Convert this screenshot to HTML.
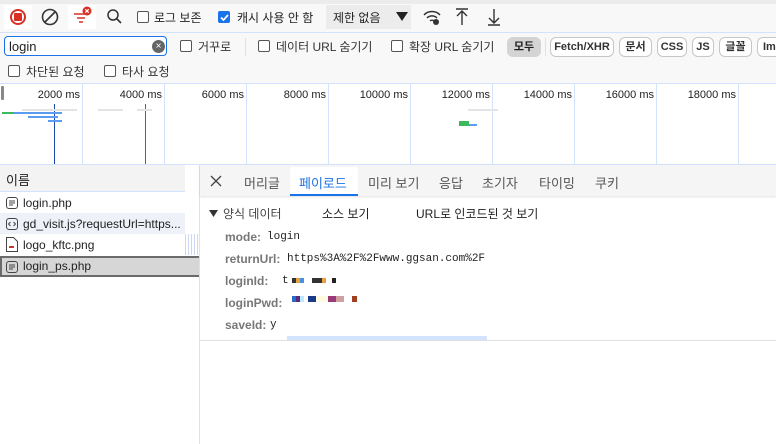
<!DOCTYPE html>
<html><head><meta charset="utf-8"><style>
*{box-sizing:border-box;margin:0;padding:0}
body{width:776px;height:444px;overflow:hidden;background:#fff;font-family:"Liberation Sans","Noto Sans CJK KR",sans-serif;font-size:12px;color:#1f1f1f;position:relative}
.a{position:absolute;white-space:nowrap}
.cb{position:absolute;width:12px;height:12px;border:1px solid #555;border-radius:2px;background:#fff}
.chip{position:absolute;top:37px;height:20px;border:1px solid #c7c7c7;border-radius:6px;background:#fff;font-size:11px;font-weight:bold;line-height:18px;text-align:center;color:#333;overflow:hidden}
.lbl{color:#777;font-weight:bold}
.mono{font-family:"Liberation Mono","DejaVu Sans Mono",monospace;font-size:11px}
.tl{position:absolute;top:84px;width:1px;height:80px;background:#d3e3fd}
.tlt{position:absolute;top:89px;font-size:11px;color:#222;text-align:right;width:70px}
.li{font-size:12px}
</style></head><body>
<div class="a" style="left:0;top:0;width:776px;height:84px;background:#f8f8f8"></div>
<div class="a" style="left:0;top:0;width:776px;height:4px;background:#ececec"></div>
<div class="a" style="left:0;top:32px;width:776px;height:1px;background:#d3e3fd"></div>
<div class="a" style="left:0;top:83px;width:776px;height:1px;background:#d3e3fd"></div>
<div class="a" style="left:4px;top:5px;width:28px;height:24px;background:#fff"></div>
<div class="a" style="left:10px;top:9px;width:16px;height:16px;border:2px solid #d93025;border-radius:50%"></div>
<div class="a" style="left:14px;top:13px;width:8px;height:8px;background:#d93025;border-radius:1px"></div>
<svg class="a" style="left:41px;top:8px" width="18" height="18"><circle cx="9" cy="9" r="7.5" fill="none" stroke="#333" stroke-width="1.6"/><line x1="4" y1="14" x2="14" y2="4" stroke="#333" stroke-width="1.6"/></svg>
<div class="a" style="left:68px;top:5px;width:28px;height:24px;background:#fff"></div>
<svg class="a" style="left:72px;top:6px" width="22" height="20"><line x1="2" y1="8" x2="14" y2="8" stroke="#d93025" stroke-width="1.5"/><line x1="5" y1="12" x2="13" y2="12" stroke="#d93025" stroke-width="1.5"/><line x1="7" y1="16" x2="11" y2="16" stroke="#d93025" stroke-width="1.5"/><circle cx="15" cy="5" r="4.5" fill="#d93025"/><path d="M13.3 3.3l3.4 3.4M16.7 3.3l-3.4 3.4" stroke="#fff" stroke-width="1.2"/></svg>
<svg class="a" style="left:106px;top:8px" width="18" height="18"><circle cx="7" cy="7" r="5" fill="none" stroke="#333" stroke-width="1.5"/><line x1="10.5" y1="10.5" x2="15" y2="15" stroke="#333" stroke-width="1.6"/></svg>
<div class="cb" style="left:137px;top:11px"></div>
<div class="a" style="left:154px;top:9px;font-size:12px">로그 보존</div>
<div class="cb" style="left:218px;top:11px;background:#1a73e8;border-color:#1a73e8"></div>
<svg class="a" style="left:219px;top:12px" width="11" height="11"><path d="M2 5.5l2.5 2.5 4.5-5" stroke="#fff" stroke-width="1.7" fill="none"/></svg>
<div class="a" style="left:237px;top:9px">캐시 사용 안 함</div>
<div class="a" style="left:326px;top:5px;width:85px;height:24px;background:#ececec"></div>
<div class="a" style="left:333px;top:9px">제한 없음</div>
<svg class="a" style="left:396px;top:12px" width="12" height="10"><path d="M0 0h12L6 9z" fill="#222"/></svg>
<svg class="a" style="left:422px;top:8px" width="20" height="18"><path d="M2 7a11 11 0 0 1 16 0M5 10a7 7 0 0 1 10 0M8 13a3 3 0 0 1 4 0" fill="none" stroke="#333" stroke-width="1.5"/><circle cx="14" cy="14" r="3" fill="#333"/></svg>
<svg class="a" style="left:455px;top:8px" width="14" height="18"><path d="M1 1h12M7 3v14M2 8l5-5 5 5" fill="none" stroke="#333" stroke-width="1.4"/></svg>
<svg class="a" style="left:487px;top:8px" width="14" height="18"><path d="M1 17h12M7 1v14M2 10l5 5 5-5" fill="none" stroke="#333" stroke-width="1.4"/></svg>
<div class="a" style="left:4px;top:36px;width:163px;height:20px;border:1px solid #1a73e8;border-radius:4px;background:#fff"></div>
<div class="a" style="left:9px;top:39px;font-size:13px">login</div>
<div class="a" style="left:152px;top:40px;width:13px;height:13px;border-radius:50%;background:#666;color:#fff;font-size:10px;line-height:13px;text-align:center">×</div>
<div class="cb" style="left:180px;top:40px"></div>
<div class="a" style="left:198px;top:38px;color:#333">거꾸로</div>
<div class="a" style="left:245px;top:38px;width:1px;height:18px;background:#d3e3fd"></div>
<div class="cb" style="left:258px;top:40px"></div>
<div class="a" style="left:276px;top:38px;color:#333">데이터 URL 숨기기</div>
<div class="cb" style="left:391px;top:40px"></div>
<div class="a" style="left:409px;top:38px;color:#333">확장 URL 숨기기</div>
<div class="a" style="left:507px;top:37px;width:34px;height:20px;border-radius:6px;background:#d4d4d4;font-weight:bold;line-height:20px;text-align:center;font-size:11px">모두</div>
<div class="a" style="left:545px;top:38px;width:1px;height:18px;background:#d3e3fd"></div>
<div class="chip" style="left:550px;width:64px">Fetch/XHR</div>
<div class="chip" style="left:619px;width:33px">문서</div>
<div class="chip" style="left:657px;width:30px">CSS</div>
<div class="chip" style="left:692px;width:22px">JS</div>
<div class="chip" style="left:719px;width:33px">글꼴</div>
<div class="chip" style="left:757px;width:30px;text-align:left;padding-left:5px">Im</div>
<div class="cb" style="left:8px;top:65px"></div>
<div class="a" style="left:26px;top:63px;color:#333">차단된 요청</div>
<div class="cb" style="left:104px;top:65px"></div>
<div class="a" style="left:122px;top:63px;color:#333">타사 요청</div>
<div class="a" style="left:0;top:84px;width:776px;height:80px;background:#fff"></div>
<div class="a" style="left:0;top:164px;width:776px;height:1px;background:#d3e3fd"></div>
<div class="a" style="left:1px;top:86px;width:3px;height:14px;background:#888;border-radius:1px"></div>
<div class="tl" style="left:82px"></div><div class="tl" style="left:164px"></div><div class="tl" style="left:246px"></div><div class="tl" style="left:328px"></div><div class="tl" style="left:410px"></div><div class="tl" style="left:492px"></div><div class="tl" style="left:574px"></div><div class="tl" style="left:656px"></div><div class="tl" style="left:738px"></div>
<div class="tlt" style="left:10px">2000 ms</div><div class="tlt" style="left:92px">4000 ms</div><div class="tlt" style="left:174px">6000 ms</div><div class="tlt" style="left:256px">8000 ms</div><div class="tlt" style="left:338px">10000 ms</div><div class="tlt" style="left:420px">12000 ms</div><div class="tlt" style="left:502px">14000 ms</div><div class="tlt" style="left:584px">16000 ms</div><div class="tlt" style="left:666px">18000 ms</div>
<div class="a" style="left:54px;top:104px;width:1px;height:60px;background:#1a47a8"></div>
<div class="a" style="left:145px;top:104px;width:1px;height:60px;background:#c0392b"></div>
<div class="a" style="left:2px;top:112px;width:12px;height:2px;background:#3bba5b"></div>
<div class="a" style="left:14px;top:112px;width:48px;height:2px;background:#5b9bf0"></div>
<div class="a" style="left:28px;top:116px;width:30px;height:2px;background:#5b9bf0"></div>
<div class="a" style="left:48px;top:120px;width:14px;height:2px;background:#5b9bf0"></div>
<div class="a" style="left:22px;top:109px;width:55px;height:2px;background:#e4e4e4"></div>
<div class="a" style="left:98px;top:109px;width:25px;height:2px;background:#e4e4e4"></div>
<div class="a" style="left:137px;top:109px;width:15px;height:2px;background:#e4e4e4"></div>
<div class="a" style="left:468px;top:109px;width:30px;height:2px;background:#e4e4e4"></div>
<div class="a" style="left:459px;top:121px;width:10px;height:5px;background:#3bba5b"></div>
<div class="a" style="left:469px;top:124px;width:8px;height:2px;background:#5b9bf0"></div>
<div class="a" style="left:0;top:165px;width:185px;height:27px;background:#f3f3f3;border-bottom:1px solid #d3e3fd"></div>
<div class="a" style="left:6px;top:170px;font-size:13px">이름</div>
<div class="a" style="left:185px;top:165px;width:14px;height:279px;background:#fff"></div>
<div class="a" style="left:199px;top:165px;width:1px;height:279px;background:#d3e3fd"></div>
<div class="a" style="left:0;top:213px;width:185px;height:21px;background:#eef1f8"></div>
<div class="a" style="left:185px;top:234px;width:14px;height:21px;background:repeating-linear-gradient(90deg,#c8d8f5 0 1px,#fff 1px 3px)"></div>
<div class="a" style="left:0;top:256px;width:199px;height:21px;background:#d6d6d6;border:2px solid #6b6b6b;border-right:none"></div>
<svg class="a" style="left:6px;top:197px" width="12" height="12"><rect x=".5" y=".5" width="11" height="11" rx="2.5" fill="none" stroke="#444"/><path d="M3 4h6M3 6h6M3 8h4" stroke="#444"/></svg>
<div class="a li" style="left:23px;top:196px">login.php</div>
<svg class="a" style="left:6px;top:218px" width="12" height="12"><rect x=".5" y=".5" width="11" height="11" rx="2.5" fill="none" stroke="#444"/><path d="M4.5 4l-2 2 2 2M7.5 4l2 2-2 2" fill="none" stroke="#444"/></svg>
<div class="a li" style="left:23px;top:217px">gd_visit.js?requestUrl=https...</div>
<svg class="a" style="left:6px;top:237px" width="12" height="15"><path d="M.5.5h7l4 4v10h-11z" fill="none" stroke="#444"/><rect x="3" y="9" width="5" height="2" fill="#c0392b"/></svg>
<div class="a li" style="left:23px;top:238px">logo_kftc.png</div>
<svg class="a" style="left:6px;top:261px" width="12" height="12"><rect x=".5" y=".5" width="11" height="11" rx="2.5" fill="none" stroke="#444"/><path d="M3 4h6M3 6h6M3 8h4" stroke="#444"/></svg>
<div class="a li" style="left:23px;top:259px">login_ps.php</div>
<div class="a" style="left:200px;top:165px;width:576px;height:31px;background:#f5f5f5;box-shadow:0 1px 2px rgba(0,0,0,.12)"></div>
<svg class="a" style="left:210px;top:175px" width="12" height="12"><path d="M1 1l10 10M11 1L1 11" stroke="#444" stroke-width="1.3"/></svg>
<div class="a" style="left:244px;top:173px;color:#555;font-size:13px">머리글</div>
<div class="a" style="left:290px;top:167px;width:68px;height:29px;background:#fff;border-bottom:2px solid #1a73e8"></div>
<div class="a" style="left:299px;top:173px;color:#1a73e8;font-size:13px">페이로드</div>
<div class="a" style="left:368px;top:173px;color:#555;font-size:13px">미리 보기</div>
<div class="a" style="left:439px;top:173px;color:#555;font-size:13px">응답</div>
<div class="a" style="left:482px;top:173px;color:#555;font-size:13px">초기자</div>
<div class="a" style="left:539px;top:173px;color:#555;font-size:13px">타이밍</div>
<div class="a" style="left:595px;top:173px;color:#555;font-size:13px">쿠키</div>
<svg class="a" style="left:209px;top:210px" width="9" height="8"><path d="M0 0h9L4.5 7z" fill="#333"/></svg>
<div class="a" style="left:223px;top:205px;color:#444">양식 데이터</div>
<div class="a" style="left:322px;top:205px;color:#222">소스 보기</div>
<div class="a" style="left:416px;top:205px;color:#222">URL로 인코드된 것 보기</div>
<div class="a lbl" style="left:225px;top:230px">mode:</div><div class="a mono" style="left:267px;top:231px">login</div>
<div class="a lbl" style="left:225px;top:252px">returnUrl:</div><div class="a mono" style="left:287px;top:253px">https%3A%2F%2Fwww.ggsan.com%2F</div>
<div class="a lbl" style="left:225px;top:274px">loginId:</div><div class="a mono" style="left:282px;top:275px">t</div>
<div class="a" style="left:292px;top:278px;width:44px;height:5px;background:linear-gradient(90deg,#333 0 4px,#e8a040 4px 8px,#4a90e2 8px 12px,#fff 12px 20px,#333 20px 30px,#e8a040 30px 34px,#fff 34px 40px,#222 40px)"></div>
<div class="a lbl" style="left:225px;top:296px">loginPwd:</div>
<div class="a" style="left:292px;top:296px;width:65px;height:6px;background:linear-gradient(90deg,#2a6ac8 0 4px,#5a2a7a 4px 8px,#bfe8ff 8px 12px,#fff 12px 16px,#1a3a8a 16px 24px,#fffbe0 24px 36px,#9a3a7a 36px 44px,#d0a0a0 44px 52px,#fff 52px 60px,#a04020 60px)"></div>
<div class="a lbl" style="left:225px;top:318px">saveId:</div><div class="a mono" style="left:270px;top:319px">y</div>
<div class="a" style="left:287px;top:336px;width:200px;height:4px;background:#d3e3fd"></div>
<div class="a" style="left:200px;top:340px;width:576px;height:1px;background:#e0e0e0"></div>
</body></html>
